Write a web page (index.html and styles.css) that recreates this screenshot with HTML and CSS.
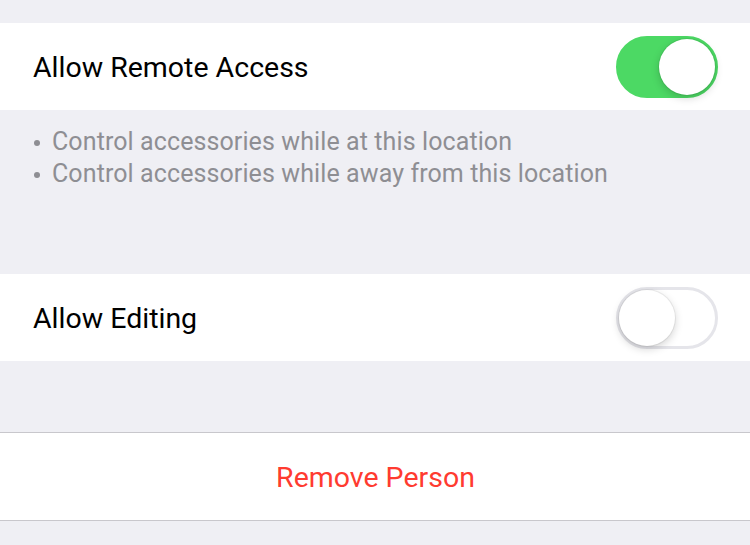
FILE: index.html
```html
<!doctype html>
<html lang="en">
<head>
  <meta charset="utf-8">
  <title>Person</title>
  <link rel="stylesheet" href="styles.css">
</head>
<body>
  <main class="settings">
    <div class="cell">
      <span class="cell-label">Allow Remote Access</span>
      <span class="switch switch-on"><span class="knob"></span></span>
    </div>
    <ul class="notes">
      <li>Control accessories while at this location</li>
      <li>Control accessories while away from this location</li>
    </ul>
    <div class="cell">
      <span class="cell-label">Allow Editing</span>
      <span class="switch"><span class="knob"></span></span>
    </div>
    <div class="cell cell-action">
      <span class="danger">Remove Person</span>
    </div>
  </main>
</body>
</html>
```

FILE: styles.css
```css
html, body {
  margin: 0px;
  height: 100%;
  background-color: #efeff4;
  font-family: Roboto, "Liberation Sans", sans-serif;
}

.settings {
  padding-top: 23px;
}

.cell {
  background-color: #FFF;
  height: 87px;
  display: flex;
  align-items: center;
  justify-content: space-between;
  padding: 2px 32px 0 33px;
  box-sizing: border-box;
}

.cell-label {
  font-size: 28.5px;
  color: #000;
}

.notes {
  list-style: none;
  margin: 0px;
  padding: 16px 33px 0 33px;
  height: 164px;
  box-sizing: border-box;
  font-size: 25px;
  letter-spacing: 0.1px;
  line-height: 32px;
  color: #8e8e93;
}

.notes li {
  display: flex;
  align-items: center;
}

.notes li::before {
  content: "";
  width: 6px;
  height: 6px;
  border-radius: 50%;
  background-color: #8e8e93;
  margin: 2px 12px 0 1px;
}

.switch {
  position: relative;
  width: 102px;
  height: 62px;
  margin-top: -2px;
  border-radius: 31px;
  box-sizing: border-box;
  border: 3px solid #e5e5ea;
  background-color: #FFF;
}

.switch-on {
  background-color: #4cd964;
  border-color: #4cd964;
}

.knob {
  position: absolute;
  top: 0px;
  left: 0px;
  width: 56px;
  height: 56px;
  border-radius: 50%;
  background-color: #FFF;
  box-shadow: 0 3px 8px rgba(0, 0, 0, 0.18), 0 0 0 1px rgba(0, 0, 0, 0.06);
}

.switch-on .knob {
  left: 40px;
}

.cell-action {
  margin-top: 71px;
  justify-content: center;
  border-top: 1px solid #c8c7cc;
  border-bottom: 1px solid #c8c7cc;
  height: 89px;
}

.danger {
  font-size: 28.5px;
  color: #ff3b30;
}
```
